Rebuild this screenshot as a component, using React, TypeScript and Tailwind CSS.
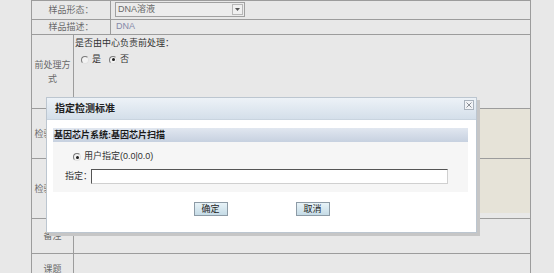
import React from 'react';

const FONT = "font-['Liberation_Sans','Noto_Sans_CJK_SC',sans-serif]";

function Radio({ checked }: { checked?: boolean }) {
  return (
    <span className="inline-flex w-[8px] h-[8px] shrink-0 rounded-full border border-t-[#7a7a7a] border-l-[#7a7a7a] border-r-[#e2e2e2] border-b-[#e2e2e2] bg-[#f3f3f3] items-center justify-center">
      {checked && <span className="w-[3px] h-[3px] rounded-full bg-[#1e1e1e]" />}
    </span>
  );
}

// one row of the page behind the dialog
function Row({ h, label, wide, children, last }: { h: string; label: React.ReactNode; wide?: boolean; children?: React.ReactNode; last?: boolean }) {
  return (
    <div className={`flex ${h} ${last ? '' : 'border-b border-[#9c9c9c]'}`}>
      <div className={`${wide ? 'w-[79px]' : 'w-[42px]'} shrink-0 border-r border-[#9c9c9c] flex items-center justify-center text-center leading-[14px] text-[#6a6a6a]`}>
        {label}
      </div>
      <div className="flex-1 min-w-0">{children}</div>
    </div>
  );
}

export default function App() {
  return (
    <div className={`relative w-[554px] h-[273px] overflow-hidden bg-[#e8e8e8] text-[9px] ${FONT}`}>
      {/* form table */}
      <div className="ml-[31px] w-[500px] border-l border-r border-t border-[#9c9c9c]">
        <Row h="h-[19px]" label="样品形态：" wide>
          <div className="pl-[4px] pt-[1px]">
            <div className="flex items-center w-[130px] h-[15px] border border-[#a0a0a0] bg-[#ececec]">
              <span className="flex-1 pl-[2px] text-[#6a6a6a] leading-none">DNA溶液</span>
              <span className="w-[11px] h-[11px] mr-[1px] border border-[#b8b8b8] bg-[#f0f0f0] flex items-center justify-center">
                <svg width="5" height="3" viewBox="0 0 5 3"><path d="M0 0h5L2.5 3z" fill="#555" /></svg>
              </span>
            </div>
          </div>
        </Row>
        <Row h="h-[15px]" label="样品描述：" wide>
          <div className="pl-[5px] h-full flex items-center text-[#8589a8]">DNA</div>
        </Row>
        <Row h="h-[74px]" label={<span>前处理方<br />式</span>}>
          <div className="pl-[1px] pt-[3px] text-[#333] leading-[11px]">
            <div>是否由中心负责前处理：</div>
            <div className="flex items-center gap-[3px] pl-[6px] mt-[5px]">
              <Radio />
              <span className="mr-[5px]">是</span>
              <Radio checked />
              <span>否</span>
            </div>
          </div>
        </Row>
        <Row h="h-[50px]" label="检验项目">
          <div className="h-full pl-[2px]">
            <div className="h-full bg-[#e6e3d8]" />
          </div>
        </Row>
        <Row h="h-[60px]" label="检验标准">
          <div className="h-full pl-[2px]">
            <div className="h-[54px] bg-[#e6e3d8]" />
          </div>
        </Row>
        <Row h="h-[35px]" label="备注" />
        <Row h="h-[30px]" label="课题" last />
      </div>

      {/* dialog */}
      <div className="absolute left-[46px] top-[97px] w-[431px] h-[136px] border border-[#bcc6d0] bg-white shadow-[3px_3px_0_0_#c6c6c6]">
        <div className="relative h-[22px] border-b border-[#c9d4df] bg-gradient-to-b from-[#edf2f7] to-[#d4dfea] flex items-center pl-[8px]">
          <span className="font-bold text-[10px] text-[#222]">指定检测标准</span>
          <span className="absolute right-[2px] top-[2px] w-[10px] h-[10px] border border-[#a9b2bc] bg-[#f1f3f6] flex items-center justify-center">
            <svg width="6" height="6" viewBox="0 0 6 6"><path d="M0.5 0.5L5.5 5.5M5.5 0.5L0.5 5.5" stroke="#8a8f96" strokeWidth="1" /></svg>
          </span>
        </div>

        <div className="ml-[6px] w-[415px] mt-[8px]">
          <div className="h-[14px] bg-gradient-to-b from-[#e1e7f0] to-[#c7d1e0] flex items-center pl-[1px]">
            <span className="font-bold text-[9px] text-[#1a1a1a] leading-none">基因芯片系统:基因芯片扫描</span>
          </div>
          <div className="h-[50px] bg-[#f6f6f6] pt-[10px]">
            <div className="flex items-center gap-[3px] pl-[20px] h-[10px] text-[#333]">
              <Radio checked />
              <span>用户指定(0.0|0.0)</span>
            </div>
            <div className="flex items-center mt-[7px] pl-[12px] text-[#333]">
              <span className="w-[26px] whitespace-nowrap">指定：</span>
              <div className="w-[357px] h-[15px] border border-t-[#555] border-l-[#555] border-r-[#d0d0d0] border-b-[#d0d0d0] bg-white" />
            </div>
          </div>
        </div>

        <div className="flex justify-center gap-[68px] mt-[10px]">
          <button className="w-[34px] h-[14px] border border-[#8d9ba6] bg-gradient-to-b from-[#e8f3f8] to-[#c5dbe6] text-[9px] text-[#1e1e1e] leading-none">确定</button>
          <button className="w-[34px] h-[14px] border border-[#8d9ba6] bg-gradient-to-b from-[#e8f3f8] to-[#c5dbe6] text-[9px] text-[#1e1e1e] leading-none">取消</button>
        </div>
      </div>
    </div>
  );
}
